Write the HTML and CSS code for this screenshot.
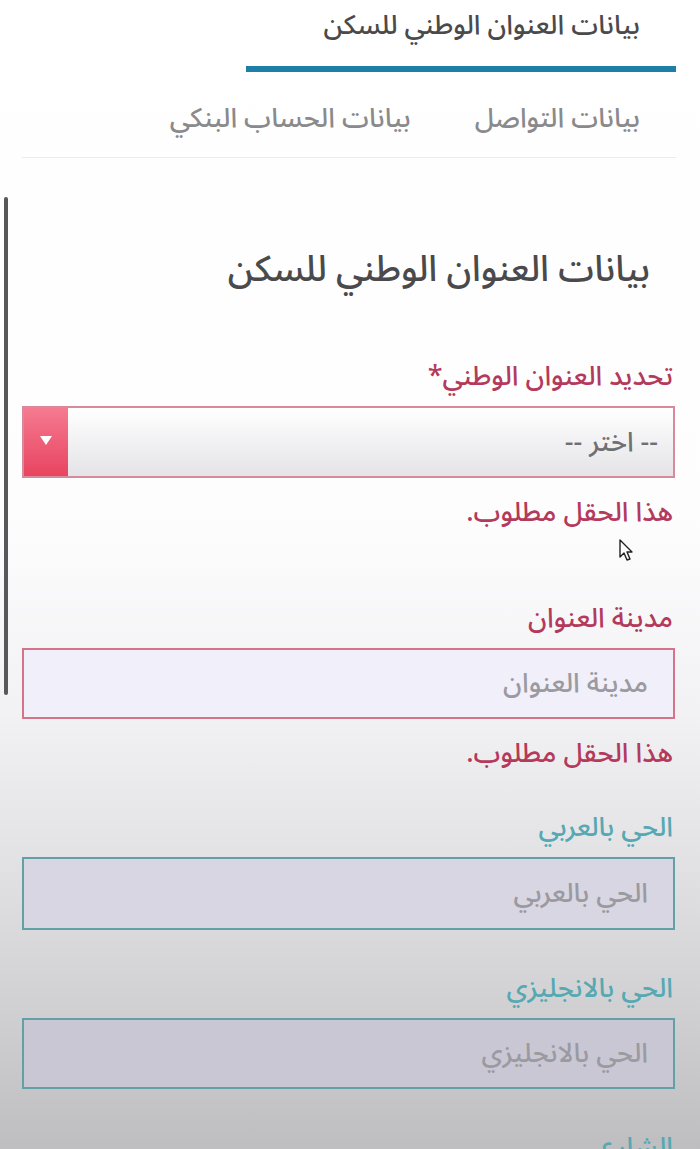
FILE: index.html
```html
<!DOCTYPE html>
<html lang="ar" dir="rtl">
<head>
<meta charset="utf-8">
<link rel="stylesheet" href="styles.css">
<title>بيانات العنوان الوطني للسكن</title>
</head>
<body>
<div class="page">
  <nav class="tabs">
    <div class="tabs-row tabs-row--first">
      <div class="tab tab--active">بيانات العنوان الوطني للسكن</div>
    </div>
    <div class="tabs-row tabs-row--second">
      <div class="tab">بيانات التواصل</div>
      <div class="tab">بيانات الحساب البنكي</div>
    </div>
  </nav>

  <main class="form">
    <h2 class="form-title">بيانات العنوان الوطني للسكن</h2>

    <div class="group group--wide">
      <label class="label label--error">تحديد العنوان الوطني*</label>
      <div class="select">
        <span class="select-value">-- اختر --</span>
        <span class="select-btn"><span class="caret"></span></span>
      </div>
      <div class="error">هذا الحقل مطلوب.</div>
    </div>

    <div class="group">
      <label class="label label--error">مدينة العنوان</label>
      <div class="input input--error"><span class="placeholder">مدينة العنوان</span></div>
      <div class="error">هذا الحقل مطلوب.</div>
    </div>

    <div class="group">
      <label class="label label--ok">الحي بالعربي</label>
      <div class="input input--ok input--mid"><span class="placeholder">الحي بالعربي</span></div>
    </div>

    <div class="group">
      <label class="label label--ok">الحي بالانجليزي</label>
      <div class="input input--ok input--low"><span class="placeholder">الحي بالانجليزي</span></div>
    </div>

    <div class="group">
      <label class="label label--ok">الشارع</label>
    </div>
  </main>

  <div class="scrollbar"></div>
  <svg class="cursor" width="16" height="24" viewBox="0 0 16 24"><path d="M1 1 L1 18 L5 14 L8 21 L11 20 L8 13 L13 13 Z" fill="#fff" stroke="#222" stroke-width="1.4" stroke-linejoin="round"/></svg>
</div>
</body>
</html>
```

FILE: styles.css
```css
html, body {
  margin: 0;
  padding: 0;
}
body {
  width: 700px;
  height: 1149px;
  overflow: hidden;
  font-family: "Noto Sans Arabic", "DejaVu Sans", sans-serif;
  font-weight: 500;
  background: linear-gradient(to bottom, #ffffff 0%, #fdfdfe 45%, #f2f2f4 62%, #e2e2e4 75%, #d0d0d2 88%, #bebec1 100%);
}
.page {
  position: relative;
  height: 1149px;
}
.tabs {
  padding: 0 24px 0 22px;
}
.tabs-row {
  display: flex;
}
.tabs-row--first {
  height: 72px;
}
.tab {
  font-size: 27px;
  color: #8a8a8c;
  line-height: 40px;
}
.tab--active {
  width: 430px;
  box-sizing: border-box;
  padding-right: 36px;
  padding-top: 6px;
  color: #4a4a4c;
  border-bottom: 6px solid #1f7ea8;
}
.tabs-row--second {
  gap: 64px;
  padding-right: 36px;
  padding-top: 27px;
  height: 58px;
  border-bottom: 1px solid #ececee;
}
.form {
  padding: 0 25px 0 22px;
}
.form-title {
  margin: 89px 25px 0 0;
  font-size: 36px;
  font-weight: 500;
  color: #4a4a4c;
  line-height: 46px;
}
.group {
  display: flex;
  flex-direction: column;
  margin-bottom: 44px;
}
.group--wide {
  margin-top: 69px;
  margin-bottom: 76px;
}
.label {
  font-size: 27px;
  line-height: 30px;
  margin: 0 2px 14px 0;
}
.label--error { color: #b43a5c; }
.label--ok { color: #56a8b2; }
.select {
  height: 72px;
  box-sizing: border-box;
  border: 2px solid #d9899b;
  background: linear-gradient(to bottom, #ffffff, #e4e4e8);
  display: flex;
  align-items: center;
  justify-content: space-between;
}
.select-value {
  font-size: 27px;
  color: #707072;
  padding-right: 15px;
}
.select-btn {
  width: 44px;
  align-self: stretch;
  background: linear-gradient(to bottom, #f57a90, #e8445f);
  display: flex;
  justify-content: center;
  padding-top: 28px;
  box-sizing: border-box;
}
.caret {
  width: 0;
  height: 0;
  border-left: 6px solid transparent;
  border-right: 6px solid transparent;
  border-top: 9px solid #fff;
}
.error {
  font-size: 27px;
  line-height: 30px;
  color: #b43a5c;
  margin: 20px 2px 0 0;
}
.input {
  height: 71px;
  box-sizing: border-box;
  display: flex;
  align-items: center;
  padding-right: 25px;
}
.input--error {
  border: 2px solid #d57488;
  background: #f1eff9;
}
.input--ok {
  border: 2px solid #62a0a8;
}
.input--mid { background: #d8d6e2; height: 73px; }
.input--low { background: #cac7d5; }
.placeholder {
  font-size: 27px;
  color: #9a9aa0;
}
.scrollbar {
  position: absolute;
  left: 4px;
  top: 197px;
  width: 4px;
  height: 498px;
  border-radius: 2px;
  background: #58585a;
}
.cursor {
  position: absolute;
  left: 619px;
  top: 539px;
}
```
